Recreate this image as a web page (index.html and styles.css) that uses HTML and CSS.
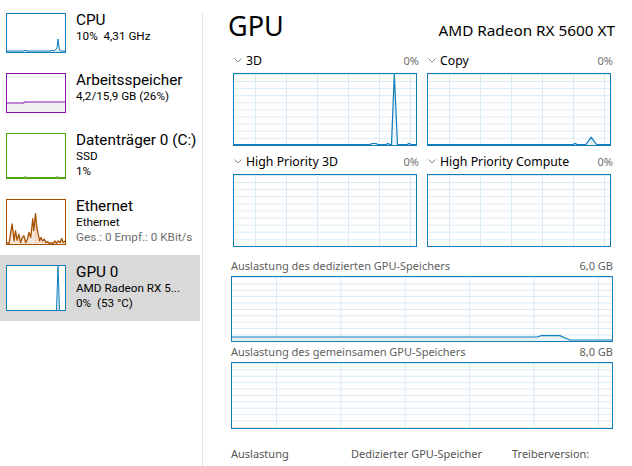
FILE: index.html
```html
<!DOCTYPE html>
<html lang="de">
<head>
<meta charset="utf-8">
<title>Task-Manager – GPU</title>
<link rel="stylesheet" href="styles.css">
</head>
<body>
<div class="app">
  <aside class="sidebar">
    <div class="item">
      <div class="thumb thumb-cpu">
        <svg viewBox="0 0 58 38" preserveAspectRatio="none"><path class="cpu-fill" d="M0 38 L0 37 L17 37 L18 36 L19 37 L44 37 L45 36 L47 37 L48 36 L50 34 L51 25 L52.5 36 L54 37 L58 37 L58 38 Z"/><path class="cpu-line" d="M0 37 L17 37 L18 36 L19 37 L44 37 L45 36 L47 37 L48 36 L50 34 L51 25 L52.5 36 L54 37 L58 37"/></svg>
      </div>
      <div class="info">
        <div class="title">CPU</div>
        <div class="sub">10%&nbsp; 4,31 GHz</div>
      </div>
    </div>
    <div class="item">
      <div class="thumb thumb-mem">
        <svg viewBox="0 0 58 38" preserveAspectRatio="none"><path class="mem-fill" d="M0 38 L0 29 L17 29 L17 28 L58 28 L58 38 Z"/><path class="mem-line" d="M0 29 L17 29 L17 28 L58 28"/></svg>
      </div>
      <div class="info">
        <div class="title">Arbeitsspeicher</div>
        <div class="sub">4,2/15,9 GB (26%)</div>
      </div>
    </div>
    <div class="item">
      <div class="thumb thumb-disk tall">
        <svg viewBox="0 0 58 44" preserveAspectRatio="none"><path class="disk-line" d="M0 43.5 L18 43.5 L18.5 42 L19 43.5 L50 43.5 L50.5 42 L51 43.5 L58 43.5"/></svg>
      </div>
      <div class="info">
        <div class="title">Datenträger 0 (C:)</div>
        <div class="sub">SSD</div>
        <div class="sub">1%</div>
      </div>
    </div>
    <div class="item">
      <div class="thumb thumb-eth tall">
        <svg viewBox="22 30 171 129" preserveAspectRatio="none"><path class="eth-fill" d="M22 159 L22 155 L28 158 L37 100 L43 150 L47 120 L52 148 L57 130 L62 155 L67 140 L72 135 L77 155 L82 145 L87 125 L92 140 L98 85 L101 120 L106 70 L110 110 L114 130 L118 150 L122 140 L127 150 L132 145 L137 155 L142 152 L147 158 L152 155 L158 158 L163 150 L168 157 L173 150 L178 155 L183 143 L188 155 L193 150 L193 159 Z"/><path class="eth-dash" d="M107 100 L107 159"/><path class="eth-line" d="M22 155 L28 158 L37 100 L43 150 L47 120 L52 148 L57 130 L62 155 L67 140 L72 135 L77 155 L82 145 L87 125 L92 140 L98 85 L101 120 L106 70 L110 110 L114 130 L118 150 L122 140 L127 150 L132 145 L137 155 L142 152 L147 158 L152 155 L158 158 L163 150 L168 157 L173 150 L178 155 L183 143 L188 155 L193 150"/></svg>
      </div>
      <div class="info">
        <div class="title">Ethernet</div>
        <div class="sub">Ethernet</div>
        <div class="sub muted">Ges.: 0 Empf.: 0 KBit/s</div>
      </div>
    </div>
    <div class="item selected">
      <div class="thumb thumb-gpu tall">
        <svg viewBox="0 0 58 44" preserveAspectRatio="none"><path class="gpu-fill" d="M49.5 44 L51 0 L52.5 44 Z"/><path class="gpu-line" d="M49.5 44 L51 0 L52.5 44"/></svg>
      </div>
      <div class="info">
        <div class="title">GPU 0</div>
        <div class="sub">AMD Radeon RX 5...</div>
        <div class="sub">0%&nbsp; (53 °C)</div>
      </div>
    </div>
  </aside>
  <div class="divider"></div>
  <main class="content">
    <header class="head">
      <h1 class="head-title">GPU</h1>
      <div class="head-model">AMD Radeon RX 5600 XT</div>
    </header>

    <section class="engines">
      <div class="engine">
        <div class="engine-head">
          <svg class="chev" viewBox="0 0 8 5"><path d="M0.5 0.5 L4 4 L7.5 0.5"/></svg>
          <span class="engine-name">3D</span>
          <span class="engine-pct">0%</span>
        </div>
        <div class="graph small">
          <svg viewBox="0 0 182 71" preserveAspectRatio="none"><path class="g-fill" d="M0 71 L0 70.5 L136 70.5 L138 69.5 L142 69.5 L144 70.5 L152 70.5 L154 69.5 L156 70.5 L157.5 70.5 L160.3 0 L163.5 70.5 L173 70.5 L175 69.5 L177 70.5 L182 70.5 L182 71 Z"/><path class="g-line" d="M0 70.5 L136 70.5 L138 69.5 L142 69.5 L144 70.5 L152 70.5 L154 69.5 L156 70.5 L157.5 70.5 L160.3 0 L163.5 70.5 L173 70.5 L175 69.5 L177 70.5 L182 70.5"/></svg>
        </div>
      </div>
      <div class="engine">
        <div class="engine-head">
          <svg class="chev" viewBox="0 0 8 5"><path d="M0.5 0.5 L4 4 L7.5 0.5"/></svg>
          <span class="engine-name">Copy</span>
          <span class="engine-pct">0%</span>
        </div>
        <div class="graph small">
          <svg viewBox="0 0 183 71" preserveAspectRatio="none"><path class="g-fill" d="M0 71 L0 70.5 L146 70.5 L148 69.5 L150 70.5 L158.7 70.5 L164 63.3 L169.7 70.5 L183 70.5 L183 71 Z"/><path class="g-line" d="M0 70.5 L146 70.5 L148 69.5 L150 70.5 L158.7 70.5 L164 63.3 L169.7 70.5 L183 70.5"/></svg>
        </div>
      </div>
      <div class="engine">
        <div class="engine-head">
          <svg class="chev" viewBox="0 0 8 5"><path d="M0.5 0.5 L4 4 L7.5 0.5"/></svg>
          <span class="engine-name">High Priority 3D</span>
          <span class="engine-pct">0%</span>
        </div>
        <div class="graph small"></div>
      </div>
      <div class="engine">
        <div class="engine-head">
          <svg class="chev" viewBox="0 0 8 5"><path d="M0.5 0.5 L4 4 L7.5 0.5"/></svg>
          <span class="engine-name">High Priority Compute</span>
          <span class="engine-pct">0%</span>
        </div>
        <div class="graph small"></div>
      </div>
    </section>

    <section class="mem-block first">
      <div class="mem-head"><span>Auslastung des dedizierten GPU-Speichers</span><span>6,0 GB</span></div>
      <div class="graph wide">
        <svg viewBox="0 0 379 64" preserveAspectRatio="none"><path class="g-fill" d="M0 64 L0 60 L303.7 60 L308.7 58.7 L327 58.7 L337 63 L379 63 L379 64 Z"/><path class="g-line" d="M0 60 L303.7 60 L308.7 58.7 L327 58.7 L337 63 L379 63"/></svg>
      </div>
    </section>
    <section class="mem-block">
      <div class="mem-head"><span>Auslastung des gemeinsamen GPU-Speichers</span><span>8,0 GB</span></div>
      <div class="graph wide"></div>
    </section>

    <section class="stats">
      <div class="stat">Auslastung</div>
      <div class="stat">Dedizierter GPU-Speicher</div>
      <div class="stat">Treiberversion:</div>
    </section>
  </main>
</div>
</body>
</html>
```

FILE: styles.css
```css
* { box-sizing: border-box; }
html, body { margin: 0; padding: 0; background: #fff; }
body {
  font-family: "Noto Sans", "Open Sans", sans-serif;
  color: #000;
  width: 632px;
  height: 466px;
  overflow: hidden;
}
.app { display: flex; height: 466px; }

/* sidebar */
.sidebar { width: 200px; flex: none; padding-top: 3px; }
.item {
  display: flex;
  align-items: flex-start;
  padding: 10px 0 10px 6px;
}
.item.selected { background: #d9d9d9; }
.thumb {
  width: 60px;
  height: 40px;
  flex: none;
  border: 1px solid;
  background: #fff;
}
.thumb.tall { height: 46px; }
.thumb svg { display: block; width: 100%; height: 100%; }
.thumb-cpu { border-color: #117dbb; }
.thumb-mem { border-color: #8b12ae; }
.thumb-disk { border-color: #4da60c; }
.thumb-eth { border-color: #a74f01; }
.thumb-gpu { border-color: #117dbb; }
.cpu-line { fill: none; stroke: #117dbb; stroke-width: 1; vector-effect: non-scaling-stroke; }
.cpu-fill { fill: #d9eaf4; }
.mem-line { fill: none; stroke: #8b12ae; stroke-width: 1; vector-effect: non-scaling-stroke; }
.mem-fill { fill: #f1eef2; }
.disk-line { fill: none; stroke: #4da60c; stroke-width: 1; vector-effect: non-scaling-stroke; }
.eth-line { fill: none; stroke: #a74f01; stroke-width: 1.3; vector-effect: non-scaling-stroke; stroke-linejoin: round; }
.eth-fill { fill: #f6e6d8; }
.eth-dash { stroke: #e8a07a; stroke-width: 1; stroke-dasharray: 1 1; vector-effect: non-scaling-stroke; }
.gpu-line { fill: none; stroke: #117dbb; stroke-width: 1; vector-effect: non-scaling-stroke; }
.gpu-fill { fill: #d9eaf4; }

.info {
  margin-left: 10px;
  margin-top: -2px;
  white-space: nowrap;
  min-width: 0;
  font-family: Roboto, "Noto Sans", sans-serif;
}
.title { font-size: 15.3px; line-height: 18px; }
.sub { font-size: 11.7px; line-height: 14.5px; }
.muted { color: #6d6d6d; }

.divider {
  width: 1px;
  flex: none;
  margin: 13px 0 0 2px;
  background: #e3e3e3;
}

/* content */
.content {
  flex: 1;
  min-width: 0;
  padding: 8px 19px 0 28px;
}
.head {
  display: flex;
  justify-content: space-between;
  align-items: baseline;
  height: 36px;
  margin-right: -2px;
}
.head-title { margin: 0 0 0 -3px; font-size: 27px; font-weight: normal; line-height: 36px; }
.head-model { font-size: 15.3px; }

.engines {
  display: grid;
  grid-template-columns: 1fr 1fr;
  column-gap: 6px;
  row-gap: 7px;
  margin-top: 8px;
}
.engine-head {
  display: flex;
  align-items: baseline;
  height: 18px;
  line-height: 18px;
  margin-bottom: 3px;
  padding-left: 3px;
}
.chev { width: 8px; height: 5px; flex: none; align-self: center; margin-top: -2px; }
.chev path { fill: none; stroke: #8a8a8a; stroke-width: 1; }
.engine-name { font-size: 12.3px; margin-left: 4px; flex: 1; }
.engine-pct { font-size: 11px; color: #707070; }

.graph {
  border: 1px solid #117dbb;
  background-color: #fff;
  background-image:
    linear-gradient(to right, #d9eaf4 1px, transparent 1px),
    linear-gradient(to bottom, #d9eaf4 1px, transparent 1px);
  background-repeat: repeat-x, repeat-y;
}
.graph svg { display: block; width: 100%; height: 100%; }
.graph.small {
  height: 73px;
  margin: 0 2px;
  background-size: 31px 100%, 100% 7.1px;
  background-position: 21px 0, 0 0;
}
.graph.wide {
  height: 66px;
  background-size: 64.4px 100%, 100% 6.4px;
  background-position: 44px 0, 0 0;
}
.g-line { fill: none; stroke: #117dbb; stroke-width: 1.2; vector-effect: non-scaling-stroke; }
.g-fill { fill: #e8f2f9; }

.mem-block { margin-top: 2px; }
.mem-block.first { margin-top: 11px; }
.mem-block + .mem-block .graph.wide { height: 67px; }
.mem-head {
  display: flex;
  justify-content: space-between;
  font-size: 11px;
  line-height: 16px;
  color: #606060;
  margin-bottom: 2px;
}

.stats {
  display: grid;
  grid-template-columns: 120px 161px 1fr;
  margin-top: 17px;
  font-size: 11px;
  line-height: 16px;
  color: #555;
}
```
